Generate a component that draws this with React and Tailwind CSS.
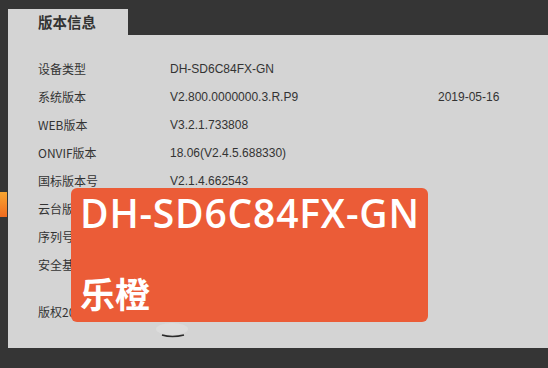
const rows = [
  ['设备类型', 'DH-SD6C84FX-GN', ''],
  ['系统版本', 'V2.800.0000000.3.R.P9', '2019-05-16'],
  ['WEB版本', 'V3.2.1.733808', ''],
  ['ONVIF版本', '18.06(V2.4.5.688330)', ''],
  ['国标版本号', 'V2.1.4.662543', ''],
  ['云台版本', '', ''],
  ['序列号', '', ''],
  ['安全基线版本', '', ''],
];

export default function App() {
  return (
    <div className="relative w-[548px] h-[368px] overflow-hidden bg-[#353535] font-['Liberation_Sans','Noto_Sans_CJK_SC',sans-serif]">
      <div className="flex flex-col h-[348px] pl-[8px] pt-[9px]">
        {/* tab */}
        <div className="w-[120px] h-[26px] bg-[#d4d4d4] pl-[30px] flex items-center">
          <span className="text-[14.5px] font-bold text-[#333] font-['Noto_Sans_CJK_SC',sans-serif] leading-none">版本信息</span>
        </div>
        {/* panel */}
        <div className="flex-1 bg-[#d4d4d4] pl-[30px] pt-[20px] text-[12px] text-[#333]">
          {rows.map(([label, value, date]) => (
            <div key={label} className="flex items-center h-[28px]">
              <span className="w-[132px] font-['Noto_Sans_CJK_SC',sans-serif]">{label}</span>
              <span className="w-[268px]">{value}</span>
              <span>{date}</span>
            </div>
          ))}
          <div className="flex items-center h-[28px] mt-[19px]">
            <span className="font-['Noto_Sans_CJK_SC',sans-serif]">版权2019</span>
          </div>
        </div>
      </div>

      {/* left edge highlight */}
      <div className="absolute left-0 top-[192px] w-[7px] h-[25px] bg-gradient-to-b from-[#f7a531] to-[#ef6a1f]" />

      {/* bottom arc */}
      <svg className="absolute left-[150px] top-[322px]" width="44" height="18" viewBox="0 0 44 18">
        <ellipse cx="22" cy="7" rx="16" ry="6" fill="#dcdcdc" />
        <path d="M12 13 Q22 16 34 13" stroke="#2b2b2b" strokeWidth="1.6" fill="none" />
      </svg>

      {/* overlay */}
      <div className="absolute left-[71px] top-[188px] w-[357px] h-[134px] rounded-[6px] bg-[#eb5c37] pl-[9px] text-white">
        <div className="mt-[3px] text-[39px] font-semibold leading-[44px] tracking-[0.8px] font-['Open_Sans',sans-serif]">DH-SD6C84FX-GN</div>
        <div className="mt-[38px] text-[35px] font-bold leading-[40px] font-['Noto_Sans_CJK_SC',sans-serif]">乐橙</div>
      </div>
    </div>
  );
}
